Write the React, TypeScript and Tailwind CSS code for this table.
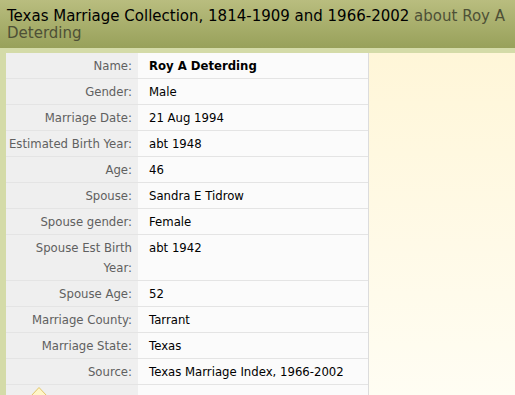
import React from 'react'

const rows: { label: string; value: string; bold?: boolean }[] = [
  { label: 'Name:', value: 'Roy A Deterding', bold: true },
  { label: 'Gender:', value: 'Male' },
  { label: 'Marriage Date:', value: '21 Aug 1994' },
  { label: 'Estimated Birth Year:', value: 'abt 1948' },
  { label: 'Age:', value: '46' },
  { label: 'Spouse:', value: 'Sandra E Tidrow' },
  { label: 'Spouse gender:', value: 'Female' },
  { label: 'Spouse Est Birth Year:', value: 'abt 1942' },
  { label: 'Spouse Age:', value: '52' },
  { label: 'Marriage County:', value: 'Tarrant' },
  { label: 'Marriage State:', value: 'Texas' },
  { label: 'Source:', value: 'Texas Marriage Index, 1966-2002' },
]

export default function App() {
  return (
    <div
      className="w-[515px] h-[395px] overflow-hidden bg-white"
      style={{ fontFamily: 'Tahoma, "DejaVu Sans", sans-serif' }}
    >
      {/* title bar */}
      <div className="h-[48px] px-[7px] pt-[8px] bg-gradient-to-b from-[#b9bd7f] to-[#98a15a] text-[15px] leading-[17px] text-black">
        Texas Marriage Collection, 1814-1909 and 1966-2002{' '}
        <span className="text-[#4e5036]">about Roy A Deterding</span>
      </div>

      {/* body */}
      <div className="flex h-[347px] bg-[#d4dba8] pt-[5px] pl-[6px]">
        <div className="w-[363px] shrink-0 border-r border-[#dcdcdc] bg-[#fbfbfb] text-[11.7px]">
          {rows.map(r => (
            <div key={r.label} className="flex border-b border-[#e4e4e4]">
              <div className="w-[132px] shrink-0 bg-[#efefef] pr-[6px] pl-[1px] pt-[3px] pb-[2px] leading-[20px] text-right text-[#606060]">
                {r.label}
              </div>
              <div
                className={
                  r.bold
                    ? 'flex-1 pl-[11px] pt-[3px] pb-[2px] leading-[20px] text-black font-bold'
                    : 'flex-1 pl-[11px] pt-[3px] pb-[2px] leading-[20px] text-black'
                }
              >
                {r.value}
              </div>
            </div>
          ))}
          <div className="relative flex h-[40px]">
            <div className="w-[132px] shrink-0 bg-[#efefef]" />
            <div className="flex-1" />
            {/* tooltip pointer */}
            <svg className="absolute left-[24px] top-[1px]" width="18" height="10" viewBox="0 0 18 10">
              <path d="M1 10 L9 1.5 L17 10 Z" fill="#fff6c8" stroke="#e2c56a" strokeWidth="1" />
            </svg>
          </div>
        </div>
        <div className="flex-1 bg-gradient-to-b from-[#fff6d8] to-[#fffdf3]" />
      </div>
    </div>
  )
}
